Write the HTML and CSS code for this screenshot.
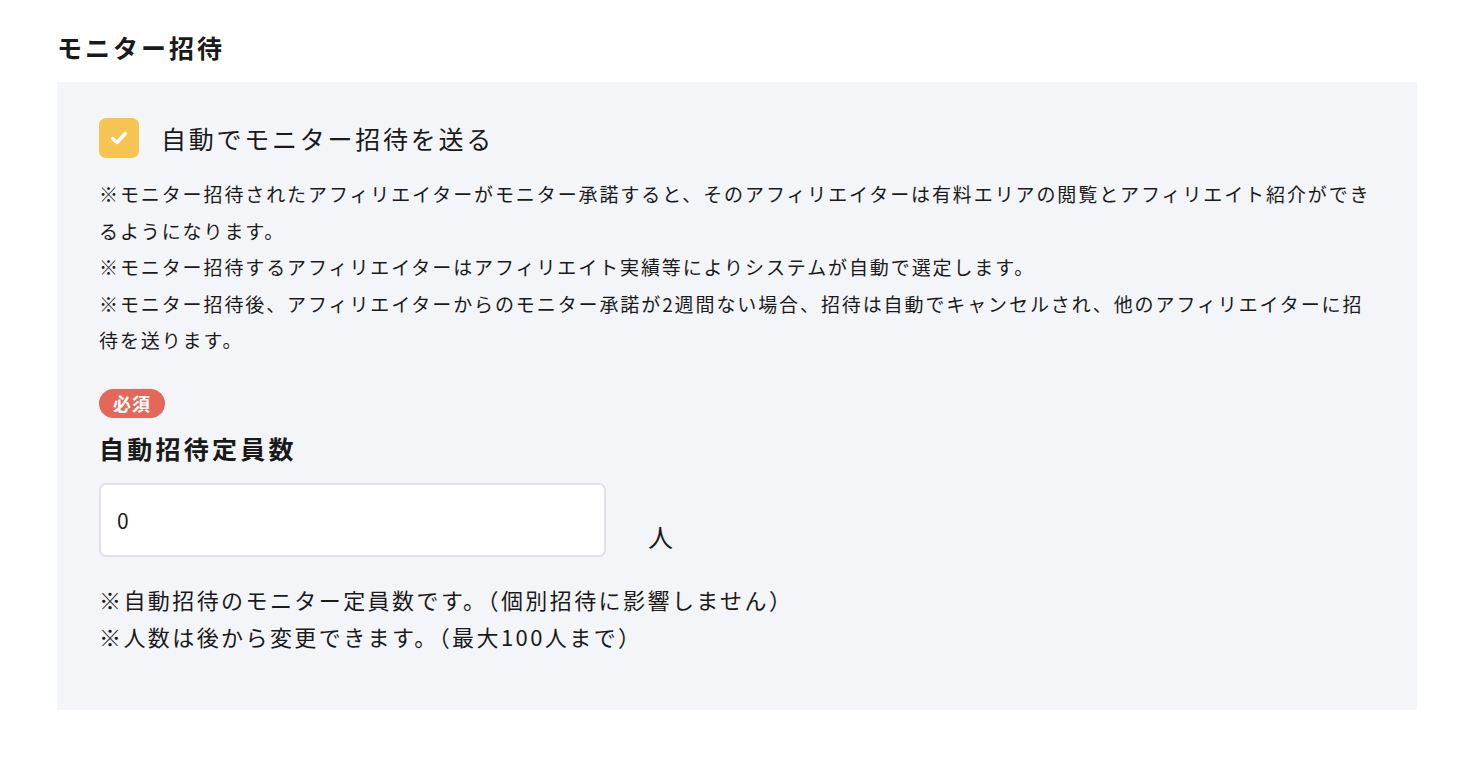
FILE: index.html
```html
<!DOCTYPE html>
<html lang="ja">
<head>
  <meta charset="UTF-8">
  <meta name="viewport" content="width=device-width, initial-scale=1.0">
  <title>モニター招待</title>
  <link rel="stylesheet" href="styles.css">
</head>
<body>
  <section class="section">
    <h2 class="section-title">モニター招待</h2>

    <div class="panel">
      <label class="check-row">
        <span class="checkbox">
          <svg width="18" height="14" viewBox="0 0 18 14"><path d="M2.5 7.5 L7 11.5 L15.5 2.5" fill="none" stroke="#fff" stroke-width="3.4" stroke-linecap="round" stroke-linejoin="round"/></svg>
        </span>
        <span class="check-label">自動でモニター招待を送る</span>
      </label>

      <p class="notes">
        ※モニター招待されたアフィリエイターがモニター承諾すると、そのアフィリエイターは有料エリアの閲覧とアフィリエイト紹介ができるようになります。<br>
        ※モニター招待するアフィリエイターはアフィリエイト実績等によりシステムが自動で選定します。<br>
        ※モニター招待後、アフィリエイターからのモニター承諾が2週間ない場合、招待は自動でキャンセルされ、他のアフィリエイターに招待を送ります。
      </p>

      <div class="field">
        <span class="badge">必須</span>
        <h3 class="field-label">自動招待定員数</h3>
        <div class="input-row">
          <input type="text" class="text-input" value="0">
          <span class="unit">人</span>
        </div>
        <p class="field-notes">
          ※自動招待のモニター定員数です。（個別招待に影響しません）<br>
          ※人数は後から変更できます。（最大100人まで）
        </p>
      </div>
    </div>
  </section>
</body>
</html>
```

FILE: styles.css
```css
body {
  margin: 0;
  font-family: "Noto Sans CJK JP", "Noto Sans", sans-serif;
  color: #1a1a1a;
  background: #fff;
}
.section {
  padding: 29px 61px 0 57px;
}
.section-title {
  margin: 0 0 17px;
  font-size: 25px;
  line-height: 36px;
  font-weight: bold;
  letter-spacing: 0.12em;
}
.panel {
  background: #f4f5f9;
  padding: 36px 42px 55px;
}
.check-row {
  display: flex;
  align-items: center;
  gap: 22px;
}
.checkbox {
  width: 40px;
  height: 40px;
  border-radius: 7px;
  background: #f6c451;
  display: flex;
  align-items: center;
  justify-content: center;
}
.check-label {
  font-size: 25px;
  line-height: 40px;
  letter-spacing: 0.11em;
}
.notes {
  margin: 18px 0 0;
  font-size: 19px;
  line-height: 36.5px;
  letter-spacing: 0.1em;
}
.field {
  margin-top: 30px;
}
.badge {
  display: inline-block;
  background: #e3685a;
  color: #fff;
  font-size: 18px;
  font-weight: bold;
  line-height: 29px;
  padding: 0 14px;
  border-radius: 15px;
  letter-spacing: 0.05em;
}
.field-label {
  margin: 12px 0 0;
  font-size: 25px;
  line-height: 36px;
  font-weight: bold;
  letter-spacing: 0.13em;
}
.input-row {
  display: flex;
  align-items: flex-end;
  gap: 42px;
  margin-top: 17px;
}
.text-input {
  box-sizing: border-box;
  width: 507px;
  height: 74px;
  border: 2px solid #e2e2e4;
  border-radius: 7px;
  background: #fff;
  padding: 0 16px;
  font-family: inherit;
  font-size: 21px;
  color: #1a1a1a;
  outline: none;
}
.unit {
  font-size: 25px;
  line-height: 36px;
  padding-bottom: 3px;
}
.field-notes {
  margin: 24px 0 0;
  font-size: 22px;
  line-height: 37px;
  letter-spacing: 0.11em;
}
```
